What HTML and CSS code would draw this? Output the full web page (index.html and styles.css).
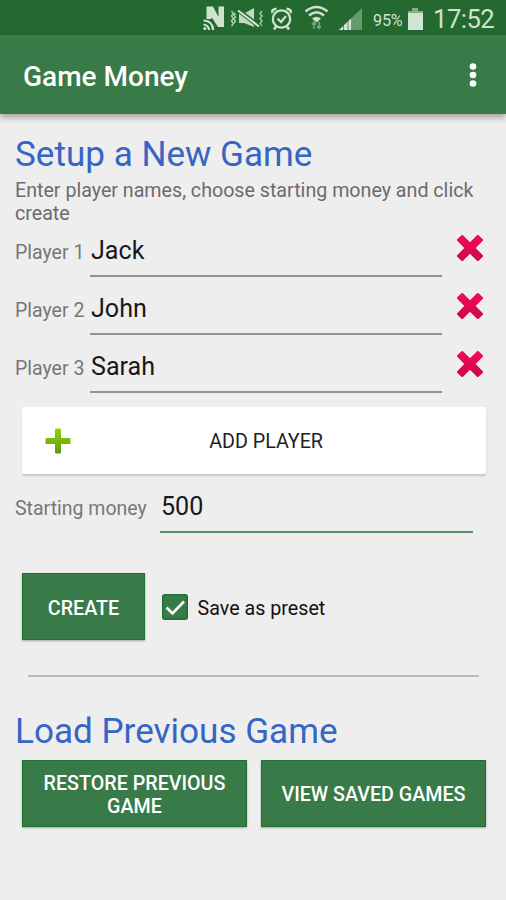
FILE: index.html
```html
<!DOCTYPE html>
<html lang="en">
<head>
<meta charset="utf-8">
<title>Game Money</title>
<link rel="stylesheet" href="styles.css">
</head>
<body>
<svg class="defs" width="0" height="0" aria-hidden="true">
  <defs>
    <linearGradient id="red" x1="0" y1="0" x2="0" y2="1"><stop offset="0" stop-color="#f5085f"/><stop offset="1" stop-color="#cc0847"/></linearGradient>
    <linearGradient id="lime" x1="0" y1="0" x2="0" y2="1"><stop offset="0" stop-color="#8fd40a"/><stop offset="1" stop-color="#5f9c0c"/></linearGradient>
    <symbol id="cross" viewBox="0 0 28 28"><path d="M5.5 1.2Q6.3.6 7 1.2L14 8.2 21 1.2Q21.8.6 22.6 1.2L26.8 5.3Q27.4 6 26.8 6.8L19.7 14 26.8 21.2Q27.4 22 26.8 22.7L22.6 26.8Q21.8 27.4 21 26.8L14 19.8 7 26.8Q6.2 27.4 5.4 26.8L1.2 22.7Q.6 22 1.2 21.2L8.3 14 1.2 6.8Q.6 6 1.2 5.3Z" fill="url(#red)"/></symbol>
  </defs>
</svg>
<header class="status">
  <svg width="132" height="35" viewBox="200 0 132 35" fill="none" stroke="#cfe3d0">
    <!-- NFC -->
    <path d="M206.500 19V6.500h6.500l5.500 10.500V6.500h5.500V27h-6l-6.500-10V19z" fill="#cfe3d0" stroke="none"/>
    <path d="M203.500 20.500Q213 21 213 30M203.500 24.500Q208.500 25 209 30" stroke-width="2.200"/>
    <circle cx="204.800" cy="28.500" r="1.600" fill="#cfe3d0" stroke="none"/>
    <!-- Vibrate / muted -->
    <path d="M231.500 11l2 2.500-2 2.500 2 2.500-2 2.500 2 2.500-2 2.500M235.500 13l-1.500 2 1.500 2-1.500 2 1.500 2-1.500 2M262 11l-2 2.500 2 2.500-2 2.500 2 2.500-2 2.500 2 2.500" stroke-width="1.500" stroke="#aacbad"/>
    <path d="M239 13.500h5l10-5.500V27l-10-4h-5z" fill="#bfdac1" stroke="none"/>
    <path d="M238 10l22 17" stroke="#24692f" stroke-width="4.500"/>
    <path d="M238 10.500l21 16" stroke-width="2.200"/>
    <!-- Alarm -->
    <circle cx="281.500" cy="19" r="8.700" stroke-width="2.200"/>
    <path d="M272.500 13Q271 9.500 276.500 8.800M290.500 13Q292 9.500 286.500 8.800M276 26.500l-2 3M287 26.500l2 3" stroke-width="2.500"/>
    <path d="M277.500 18.500l3.500 3.500 5-6" stroke-width="2.200"/>
    <!-- Wi-Fi -->
    <path d="M305.500 11.500Q316.500 2.500 327.500 11.500M309 15.500Q316.500 9 324 15.500" stroke-width="2.600"/>
    <path d="M312 18.500q4.500-3.500 9 0l-4.500 4z" fill="#cfe3d0" stroke="none"/>
    <path d="M314 29v-7M312 24.500l2-2.500 2 2.500M319 21.500v7M317 26l2 2.500 2-2.500" stroke="#79a880" stroke-width="1.500"/>
  </svg>
  <svg class="signal" width="24" height="35" viewBox="0 0 24 35"><path d="M0 30L23 8v22z" fill="#69996e"/><path d="M0 30l12-11.500V30z" fill="#d5e6d6"/><path d="M4.500 22v8M9 18v12" stroke="#24692f" stroke-width=".7"/></svg>
  <span class="percent">95%</span>
  <svg class="battery" width="17" height="22" viewBox="0 0 17 22"><path d="M1 3h4V0h6v3h5v19H1z" fill="#d2e5d4"/><path d="M1 3h4V0h6v3h5v2H1z" fill="#86af8a"/></svg>
  <span class="clock">17:52</span>
</header>
<div class="toolbar">
  <h1>Game Money</h1>
  <svg width="8" height="26" viewBox="0 0 8 26" fill="#fff"><circle cx="4" cy="4.500" r="3.300"/><circle cx="4" cy="13" r="3.300"/><circle cx="4" cy="21.500" r="3.300"/></svg>
</div>
<main>
  <h2>Setup a New Game</h2>
  <p class="hint">Enter player names, choose starting money and click create</p>
  <div class="players">
    <div class="row"><span class="label">Player 1</span><span class="field">Jack</span><svg class="remove"><use href="#cross"/></svg></div>
    <div class="row"><span class="label">Player 2</span><span class="field">John</span><svg class="remove"><use href="#cross"/></svg></div>
    <div class="row"><span class="label">Player 3</span><span class="field">Sarah</span><svg class="remove"><use href="#cross"/></svg></div>
  </div>
  <div class="add">
    <svg width="26" height="26" viewBox="0 0 26 26"><path d="M11 .5h4q1 0 1 1V10h8.500q1 0 1 1v4q0 1-1 1H16v8.500q0 1-1 1h-4q-1 0-1-1V16H1.500q-1 0-1-1v-4q0-1 1-1H10V1.500q0-1 1-1z" fill="url(#lime)"/></svg>
    <span>ADD PLAYER</span>
  </div>
  <div class="money"><span class="label">Starting money</span><span class="field">500</span></div>
  <div class="create-row">
    <div class="button create">CREATE</div>
    <svg class="check" width="26" height="26" viewBox="0 0 26 26"><rect x=".7" y=".7" width="24.600" height="24.600" rx="2" fill="#387a48" stroke="#1f7036" stroke-width="1.400"/><path d="M4.500 13.500l6 6L22 7.500" fill="none" stroke="#fff" stroke-width="2.600"/></svg>
    <span class="preset">Save as preset</span>
  </div>
  <hr>
  <h2>Load Previous Game</h2>
  <div class="load">
    <div class="button">RESTORE PREVIOUS GAME</div>
    <div class="button">VIEW SAVED GAMES</div>
  </div>
</main>
</body>
</html>
```
FILE: styles.css
```css
* { box-sizing: border-box; }
body { margin: 0; height: 900px; overflow: hidden; background: #eee; color: #222; font-family: Roboto, "Liberation Sans", sans-serif; font-size: 19.7px; line-height: 23px; }
svg { display: block; flex: none; }
.defs { position: absolute; }
.status { display: flex; align-items: center; height: 35px; padding-left: 200px; background: #24692f; color: #cfe3d0; white-space: nowrap; }
.signal { margin-left: 7px; }
.percent { margin: 5px 0 0 10px; width: 32px; font-size: 16.2px; letter-spacing: -.2px; }
.battery { margin: 2px 0 0 2px; }
.clock { margin: 4px 0 0 9px; font-size: 25.6px; letter-spacing: -.5px; }
.toolbar { display: flex; align-items: center; justify-content: space-between; height: 79px; padding: 0 29px 0 23px; background: #387a48; box-shadow: 0 3px 7px rgba(70, 45, 45, .45); }
h1 { margin: 4px 0 0; color: #fff; font-size: 28px; line-height: 34px; font-weight: 500; }
main { padding: 19px 20px 0 15px; }
h2 { margin: 0; color: #3565c5; font-size: 35.1px; line-height: 42px; font-weight: 400; }
.hint { margin: 4px 0 0; color: #6c6c6c; font-size: 19.65px; }
.players { padding-top: 9px; }
.row, .money { display: flex; align-items: baseline; height: 58px; }
.row { padding-top: 1px; }
.label { flex: none; width: 75px; color: #777; font-size: 19.5px; }
.field { flex: none; width: 352px; height: 42px; padding: 1px 0 0 1px; border-bottom: 2px solid #929292; color: #181818; font-size: 25.1px; line-height: 30px; }
.row .field { height: 42px; }
.remove { align-self: flex-start; width: 28px; height: 28px; margin: -1px 0 0 14px; }
.add { display: flex; align-items: center; justify-content: space-between; height: 67px; margin: -1px 0 0 7px; padding: 0 163px 0 23px; border-radius: 2px; background: #fff; box-shadow: 0 2px 2px rgba(0, 0, 0, .17); }
.add span { margin-top: 2px; }
.money { height: 99px; padding-top: 17px; }
.money .label { width: 145px; }
.money .field { width: 313px; padding-top: 1px; border-bottom-color: #5c9068; }
.create-row { display: flex; align-items: center; height: 67px; margin-left: 7px; }
.button { display: flex; align-items: center; justify-content: center; width: 225px; height: 67px; padding: 2px 12px 0; border: 1px solid #20702f; background: #387a48; color: #fff; font-weight: 500; text-align: center; box-shadow: 0 1px 2px rgba(0, 0, 0, .3); }
.create { width: 123px; padding-top: 3px; }
.check { margin-left: 17px; }
.preset { margin: 3px 0 0 9.5px; color: #111; }
hr { height: 2px; margin: 35px 7px 33px 13px; border: 0; background: #b9b9b9; }
.load { display: flex; gap: 14px; margin: 8px 0 0 7px; }
```
